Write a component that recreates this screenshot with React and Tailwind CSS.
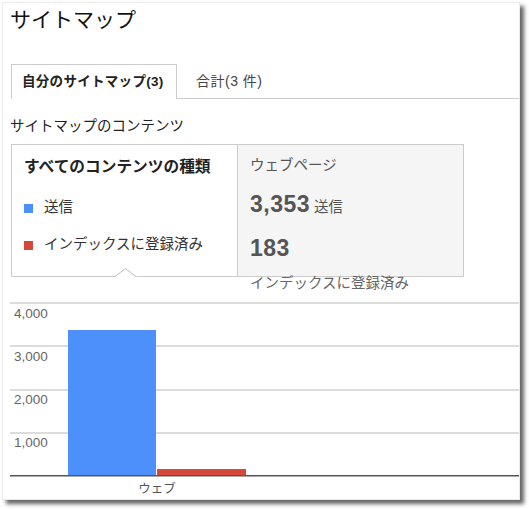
import React from "react";

const FONT = { fontFamily: '"Liberation Sans", "Noto Sans CJK JP", sans-serif' };

function Chart() {
  const grid = [6, 49, 93, 136];
  const labels = [
    { t: "4,000", y: 22 },
    { t: "3,000", y: 65 },
    { t: "2,000", y: 108 },
    { t: "1,000", y: 151 },
  ];
  return (
    <svg width="509" height="203" className="block" style={FONT}>
      {grid.map((y) => (
        <rect key={y} x="0" y={y} width="509" height="2" fill="#dcdcdc" />
      ))}
      {labels.map((l) => (
        <text key={l.t} x="4" y={l.y} fontSize="13.5" fill="#666">
          {l.t}
        </text>
      ))}
      <rect x="58" y="34" width="88" height="145" fill="#4d8ffb" />
      <rect x="147" y="173" width="89" height="6" fill="#d4493a" />
      <rect x="0" y="179" width="509" height="1.5" fill="#555" />
      <text x="147" y="197" fontSize="12.5" fill="#555" textAnchor="middle">
        ウェブ
      </text>
    </svg>
  );
}

export default function App() {
  return (
    <div className="w-[529px] h-[510px] bg-white overflow-hidden" style={FONT}>
      <div className="ml-[2px] mt-[2px] w-[518px] h-[498px] border border-[#ececec] bg-white shadow-[4px_4px_4px_rgba(0,0,0,0.6)]">
        {/* Title */}
        <div className="h-[40px] pt-[3px] pl-[7px] text-[21px] leading-[28px] text-[#111]">
          サイトマップ
        </div>

        {/* Tabs */}
        <div className="mt-[21px] flex h-[35px]">
          <div className="w-[8px]" />
          <div className="w-[166px] h-[35px] border-t border-l border-r border-[#ccc] pl-[10px] flex items-center text-[13.5px] font-bold text-[#222] tracking-[0.3px]">
            自分のサイトマップ(3)
          </div>
          <div className="flex-1 h-[35px] border-b border-[#ccc] pl-[19px] flex items-center text-[14px] text-[#444] tracking-[0.5px]">
            合計(3 件)
          </div>
        </div>

        {/* Section heading */}
        <div className="mt-[17px] pl-[7px] text-[14.5px] leading-[20px] text-[#222]">
          サイトマップのコンテンツ
        </div>

        {/* Legend box */}
        <div className="mt-[8px] ml-[8px] flex h-[133px]">
          <div className="relative w-[226px] h-[133px] border-l border-t border-b border-[#ccc] bg-white pl-[12px] pt-[12px]">
            <div className="text-[15.7px] leading-[20px] font-bold text-[#222] whitespace-nowrap">
              すべてのコンテンツの種類
            </div>
            <div className="mt-[21px] flex items-center h-[20px] text-[14.5px] text-[#333]">
              <span className="inline-block w-[9px] h-[9px] bg-[#4d8ffb] mr-[11px]" />
              送信
            </div>
            <div className="mt-[17px] flex items-center h-[20px] text-[14.5px] text-[#333]">
              <span className="inline-block w-[9px] h-[9px] bg-[#d4493a] mr-[11px]" />
              インデックスに登録済み
            </div>
            <svg
              width="22"
              height="10"
              className="absolute left-[103px] bottom-[-1px]"
            >
              <rect x="0.5" y="9" width="21" height="1" fill="#fff" />
              <polyline
                points="0,9.5 10.5,1.5 21,9.5"
                fill="none"
                stroke="#bbb"
                strokeWidth="1"
              />
            </svg>
          </div>
          <div className="w-[227px] h-[133px] border border-[#ccc] bg-[#f5f5f5] pl-[12px] pt-[10px] text-[#555]">
            <div className="text-[14.5px] leading-[20px]">ウェブページ</div>
            <div className="mt-[15px] h-[28px] flex items-baseline whitespace-nowrap">
              <span className="text-[23px] font-bold leading-[28px] tracking-[0.5px]">3,353</span>
              <span className="ml-[4px] text-[14.5px]">送信</span>
            </div>
            <div className="mt-[16px] h-[28px] text-[23px] font-bold leading-[28px] tracking-[0.5px]">183</div>
            <div className="mt-[11px] text-[14.5px] leading-[20px] whitespace-nowrap text-[#666]">
              インデックスに登録済み
            </div>
          </div>
        </div>

        {/* Chart */}
        <div className="mt-[19px] ml-[7px]">
          <Chart />
        </div>
      </div>
    </div>
  );
}
